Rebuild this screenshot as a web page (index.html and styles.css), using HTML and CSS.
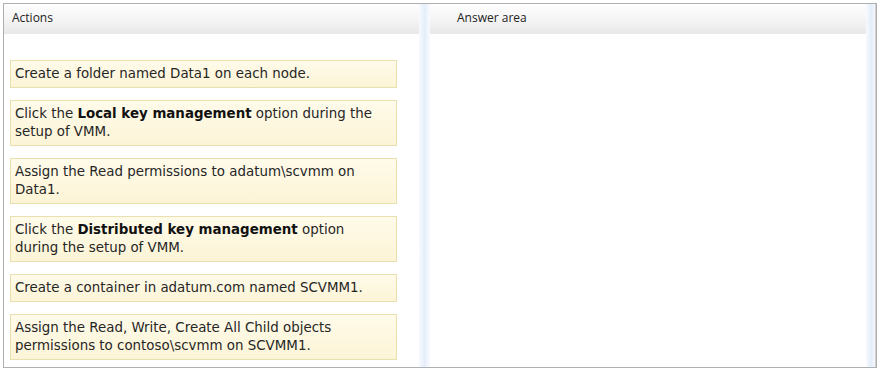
FILE: index.html
```
<!DOCTYPE html>
<html>
<head>
  <meta charset="UTF-8" />
  <title>Actions / Answer area</title>
  <link rel="stylesheet" href="styles.css">
</head>
<body>
  <div class="frame">
    <div class="panel actions">
      <div class="panel-head">Actions</div>
      <div class="card-list">
        <div class="card">Create a folder named Data1 on each node.</div>
        <div class="card">Click the <b>Local key management</b> option during the setup of VMM.</div>
        <div class="card">Assign the Read permissions to adatum\scvmm on Data1.</div>
        <div class="card">Click the <b>Distributed key management</b> option during the setup of VMM.</div>
        <div class="card">Create a container in adatum.com named SCVMM1.</div>
        <div class="card">Assign the Read, Write, Create All Child objects permissions to contoso\scvmm on SCVMM1.</div>
      </div>
    </div>
    <div class="divider"></div>
    <div class="panel answer">
      <div class="panel-head">Answer area</div>
    </div>
    <div class="edge"></div>
  </div>
</body>
</html>
```

FILE: styles.css
```
body { margin: 0; background: #fff; font-family: "DejaVu Sans", sans-serif; }

.frame {
  margin: 3px 0 0 3px;
  width: 872px;
  height: 363px;
  border: 1px solid #b0b0b0;
  display: flex;
}

.panel { display: flex; flex-direction: column; }
.actions { width: 415px; }
.answer { flex: 1; }

.panel-head {
  height: 30px;
  line-height: 28px;
  padding-left: 8px;
  font-family: "Open Sans", sans-serif;
  font-size: 12px;
  color: #222;
  background: linear-gradient(#fdfdfd, #f4f4f4 55%, #e8e8e8);
}
.answer .panel-head { padding-left: 27px; }

.divider {
  width: 11px;
  background: linear-gradient(90deg, #f7fafe, #edf3fc 30%, #e4edf9 50%, #edf3fc 70%, #f8fbff);
}
.edge {
  width: 9px;
  background: linear-gradient(90deg, #f8fbff, #e9f1fb 40%, #e3ecf8 60%, #f5f8fd);
  border-right: 1px solid #cfcfcf;
}

.card-list {
  padding: 26px 0 0 6px;
  display: flex;
  flex-direction: column;
  gap: 12px;
}

.card {
  width: 370px;
  padding: 4px 11px 4px 4px;
  border: 1px solid #eadfae;
  background: linear-gradient(#fffbea, #fcf4d6);
  font-size: 13.4px;
  line-height: 18px;
  color: #262626;
}
.card b { font-weight: bold; color: #111; }
```
